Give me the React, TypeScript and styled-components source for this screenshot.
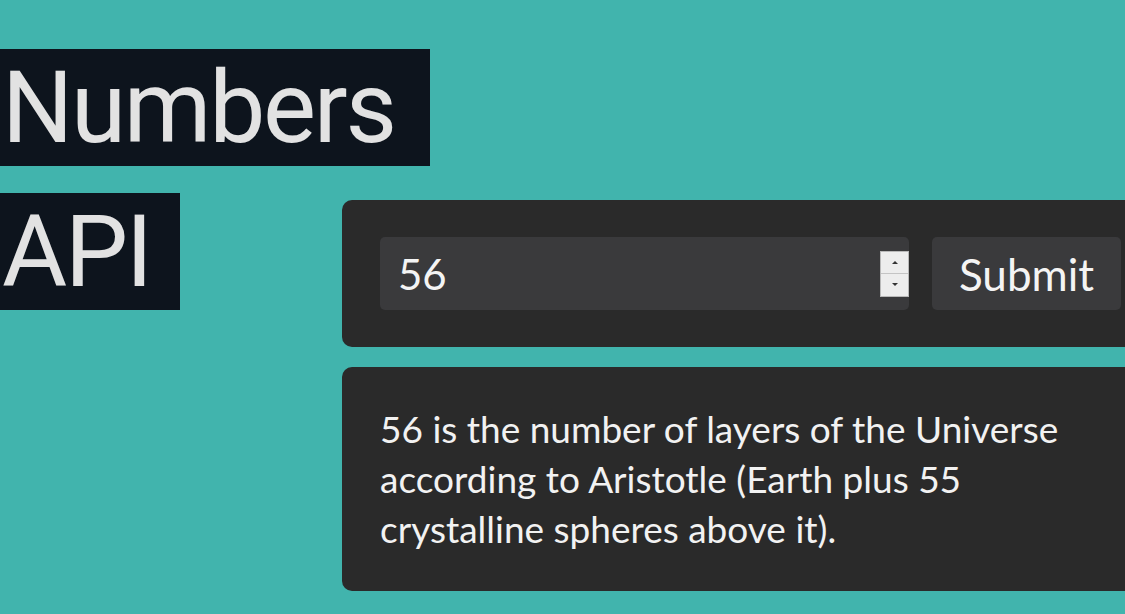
import { createGlobalStyle, styled } from "styled-components";

const GlobalStyle = createGlobalStyle`
  html, body {
    margin: 0;
    padding: 0;
    background: #41b4ad;
    overflow: hidden;
  }
`;

const Page = styled.div`
  display: grid;
  grid-template-columns: 342px 1fr;
  width: 1125px;
  height: 614px;
  overflow: hidden;
`;

const TitleColumn = styled.div`
  display: flex;
  flex-direction: column;
  align-items: flex-start;
  gap: 27px;
  padding-top: 49px;
`;

type TitleLineProps = {
  $padRight: number;
};
const TitleLine = styled.span<TitleLineProps>`
  display: inline-block;
  background: #0d141d;
  color: #e2e2e2;
  font-family: Roboto, "Liberation Sans", sans-serif;
  font-size: 100px;
  line-height: 117px;
  height: 117px;
  padding-left: 2px;
  padding-right: ${(p) => p.$padRight}px;
  letter-spacing: -2.3px;
`;

const MainColumn = styled.div`
  display: flex;
  flex-direction: column;
  gap: 20px;
  padding-top: 200px;
`;

const Card = styled.div`
  width: 820px;
  background: #2a2a2a;
  border-radius: 10px;
  padding: 37px 38px;
  box-sizing: border-box;
`;

const FormRow = styled.form`
  display: flex;
  gap: 23px;
  margin: 0;
`;

const InputBox = styled.div`
  display: flex;
  align-items: center;
  width: 529px;
  height: 73px;
  background: #3a3a3c;
  border-radius: 5px;
  box-sizing: border-box;
  padding: 0 0 0 18px;
`;

const NumberField = styled.input`
  flex: 1;
  min-width: 0;
  background: transparent;
  border: 0;
  outline: none;
  color: #f4f4f4;
  font-family: Lato, "Noto Sans", sans-serif;
  font-size: 42px;
  padding: 0;
`;

const Spinner = styled.div`
  display: flex;
  flex-direction: column;
  width: 29px;
  height: 46px;
  border: 1px solid #b9b9b9;
  box-sizing: border-box;
  background: #ececec;
`;

type SpinButtonProps = {
  $down?: boolean;
};
const SpinButton = styled.div<SpinButtonProps>`
  flex: 1;
  display: flex;
  align-items: center;
  justify-content: center;
  background: #ededed;
  border-top: ${(p) => (p.$down ? "1px solid #c4c4c4" : "0")};
  &::after {
    content: "";
    border-left: 3px solid transparent;
    border-right: 3px solid transparent;
    ${(p) =>
      p.$down ? "border-top: 3px solid #333;" : "border-bottom: 3px solid #333;"}
  }
`;

const SubmitButton = styled.button`
  width: 189px;
  height: 73px;
  background: #3a3a3c;
  color: #f4f4f4;
  border: 0;
  border-radius: 5px;
  font-family: Lato, "Noto Sans", sans-serif;
  font-size: 44px;
  padding: 0;
  cursor: pointer;
`;

const FactText = styled.p`
  margin: 0;
  width: 700px;
  color: #f2f2f2;
  font-family: Lato, "Noto Sans", sans-serif;
  font-size: 37px;
  line-height: 50px;
`;

export default function App() {
  return (
    <>
      <GlobalStyle />
      <Page>
        <TitleColumn>
          <TitleLine $padRight={35}>Numbers</TitleLine>
          <TitleLine $padRight={29}>API</TitleLine>
        </TitleColumn>
        <MainColumn>
          <Card>
            <FormRow onSubmit={(e) => e.preventDefault()}>
              <InputBox>
                <NumberField type="text" defaultValue="56" />
                <Spinner>
                  <SpinButton />
                  <SpinButton $down />
                </Spinner>
              </InputBox>
              <SubmitButton type="submit">Submit</SubmitButton>
            </FormRow>
          </Card>
          <Card>
            <FactText>
              56 is the number of layers of the Universe according to Aristotle
              (Earth plus 55 crystalline spheres above it).
            </FactText>
          </Card>
        </MainColumn>
      </Page>
    </>
  );
}
